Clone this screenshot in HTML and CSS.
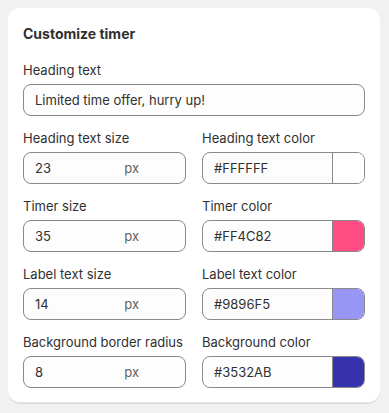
FILE: index.html
```html
<!DOCTYPE html>
<html lang="en">
<head>
    <meta charset="UTF-8">
    <meta name="viewport" content="width=device-width, initial-scale=1.0">
    <title>Customize timer</title>
    <link rel="stylesheet" href="styles.css">
</head>
<body>
    <div class="card">
        <h2 class="card-title">Customize timer</h2>

        <div class="field">
            <label class="field-label">Heading text</label>
            <div class="input">
                <span class="input-value">Limited time offer, hurry up!</span>
            </div>
        </div>

        <div class="field-grid">
            <div class="field">
                <label class="field-label">Heading text size</label>
                <div class="input">
                    <span class="input-value">23</span>
                    <span class="input-suffix">px</span>
                </div>
            </div>
            <div class="field">
                <label class="field-label">Heading text color</label>
                <div class="input input-color">
                    <span class="input-value">#FFFFFF</span>
                    <span class="swatch" style="background: #FFFFFF"></span>
                </div>
            </div>

            <div class="field">
                <label class="field-label">Timer size</label>
                <div class="input">
                    <span class="input-value">35</span>
                    <span class="input-suffix">px</span>
                </div>
            </div>
            <div class="field">
                <label class="field-label">Timer color</label>
                <div class="input input-color">
                    <span class="input-value">#FF4C82</span>
                    <span class="swatch" style="background: #FF4C82"></span>
                </div>
            </div>

            <div class="field">
                <label class="field-label">Label text size</label>
                <div class="input">
                    <span class="input-value">14</span>
                    <span class="input-suffix">px</span>
                </div>
            </div>
            <div class="field">
                <label class="field-label">Label text color</label>
                <div class="input input-color">
                    <span class="input-value">#9896F5</span>
                    <span class="swatch" style="background: #9896F5"></span>
                </div>
            </div>

            <div class="field">
                <label class="field-label">Background border radius</label>
                <div class="input">
                    <span class="input-value">8</span>
                    <span class="input-suffix">px</span>
                </div>
            </div>
            <div class="field">
                <label class="field-label">Background color</label>
                <div class="input input-color">
                    <span class="input-value">#3532AB</span>
                    <span class="swatch" style="background: #3532AB"></span>
                </div>
            </div>
        </div>
    </div>
</body>
</html>
```

FILE: styles.css
```css
body {
    margin: 0;
    padding: 8px;
    background: #f1f1f1;
    font-family: Inter, "Noto Sans", sans-serif;
    font-size: 13px;
    line-height: 20px;
    color: #303030;
}
.card {
    width: 372px;
    box-sizing: border-box;
    background: #ffffff;
    border-radius: 12px;
    padding: 16px 15px 15px;
    box-shadow: 0 1px 0 0 rgba(26, 26, 26, 0.1), inset 0 -1px 0 0 #e3e3e3;
    display: flex;
    flex-direction: column;
    gap: 16px;
}
.card-title {
    margin: 0;
    font-size: 14px;
    line-height: 20px;
    font-weight: 650;
}
.field-grid {
    display: grid;
    grid-template-columns: 1fr 1fr;
    column-gap: 16px;
    row-gap: 12px;
    margin-top: -4px;
}
.field {
    display: flex;
    flex-direction: column;
    gap: 4px;
    min-width: 0;
}
.field-label {
    font-weight: 400;
    white-space: nowrap;
}
.input {
    display: flex;
    align-items: center;
    height: 32px;
    box-sizing: border-box;
    border: 1px solid #8a8a8a;
    border-radius: 8px;
    background: #fdfdfd;
    padding: 0 12px 0 11px;
    font-weight: 400;
}
.input-value {
    flex: 1;
}
.input-suffix {
    color: #616161;
    margin-right: 34px;
}
.input-color {
    padding-right: 0;
    overflow: hidden;
}
.swatch {
    align-self: stretch;
    width: 31px;
    border-left: 1px solid #8a8a8a;
}
```
